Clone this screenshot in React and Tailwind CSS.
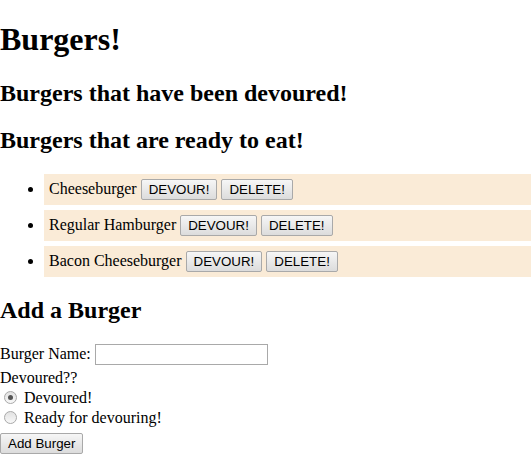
const burgers = [
  { id: 1, name: 'Cheeseburger' },
  { id: 2, name: 'Regular Hamburger' },
  { id: 3, name: 'Bacon Cheeseburger' },
];

function OldButton({ children }) {
  return (
    <button
      type="button"
      className="inline-block align-baseline h-[21px] px-[7px] border border-[#a9a9a9] rounded-[2px] bg-linear-to-b from-[#f6f6f6] to-[#dcdcdc] font-['Liberation_Sans',Arial,sans-serif] text-[13.33px] leading-[17px] text-black"
    >
      {children}
    </button>
  );
}

function Radio({ checked }) {
  return (
    <span className="inline-flex shrink-0 items-center justify-center ml-[4px] mr-[3px] w-[13px] h-[13px] rounded-full border border-[#a9a9a9] bg-linear-to-b from-[#e2e2e2] to-[#f8f8f8]">
      {checked && <span className="w-[5px] h-[5px] rounded-full bg-[#555]" />}
    </span>
  );
}

export default function App() {
  return (
    <div className="font-['Liberation_Serif','Times_New_Roman',serif] text-black text-[16px] leading-[normal] bg-white min-h-[472px]">
      <h1 className="text-[32px] font-bold my-[21.44px]">Burgers!</h1>

      <h2 className="text-[24px] font-bold my-[19.92px]">Burgers that have been devoured!</h2>

      <h2 className="text-[24px] font-bold my-[19.92px]">Burgers that are ready to eat!</h2>
      <ul className="list-disc pl-10 my-4">
        {burgers.map((b) => (
          <li key={b.id} className="h-[31px] bg-[#faebd7] ml-[4px] mb-[5px] px-[5px] py-[5px]">
            {b.name} <OldButton>DEVOUR!</OldButton> <OldButton>DELETE!</OldButton>
          </li>
        ))}
      </ul>

      <h2 className="text-[24px] font-bold my-[19.92px]">Add a Burger</h2>
      <form>
        <div>
          Burger Name:{' '}
          <input
            type="text"
            className="inline-block align-baseline w-[173px] h-[21px] border border-[#a9a9a9] bg-white px-[2px] text-[13.33px] font-['Liberation_Sans',Arial,sans-serif]"
          />
        </div>
        <div className="mt-[4px]">Devoured??</div>
        <div className="mt-[1px] h-[20px] flex items-center">
          <Radio checked />
          <span className="ml-[4px]">Devoured!</span>
        </div>
        <div className="h-[20px] flex items-center">
          <Radio />
          <span className="ml-[4px]">Ready for devouring!</span>
        </div>
        <div className="mt-[5px]">
          <OldButton>Add Burger</OldButton>
        </div>
      </form>
    </div>
  );
}
